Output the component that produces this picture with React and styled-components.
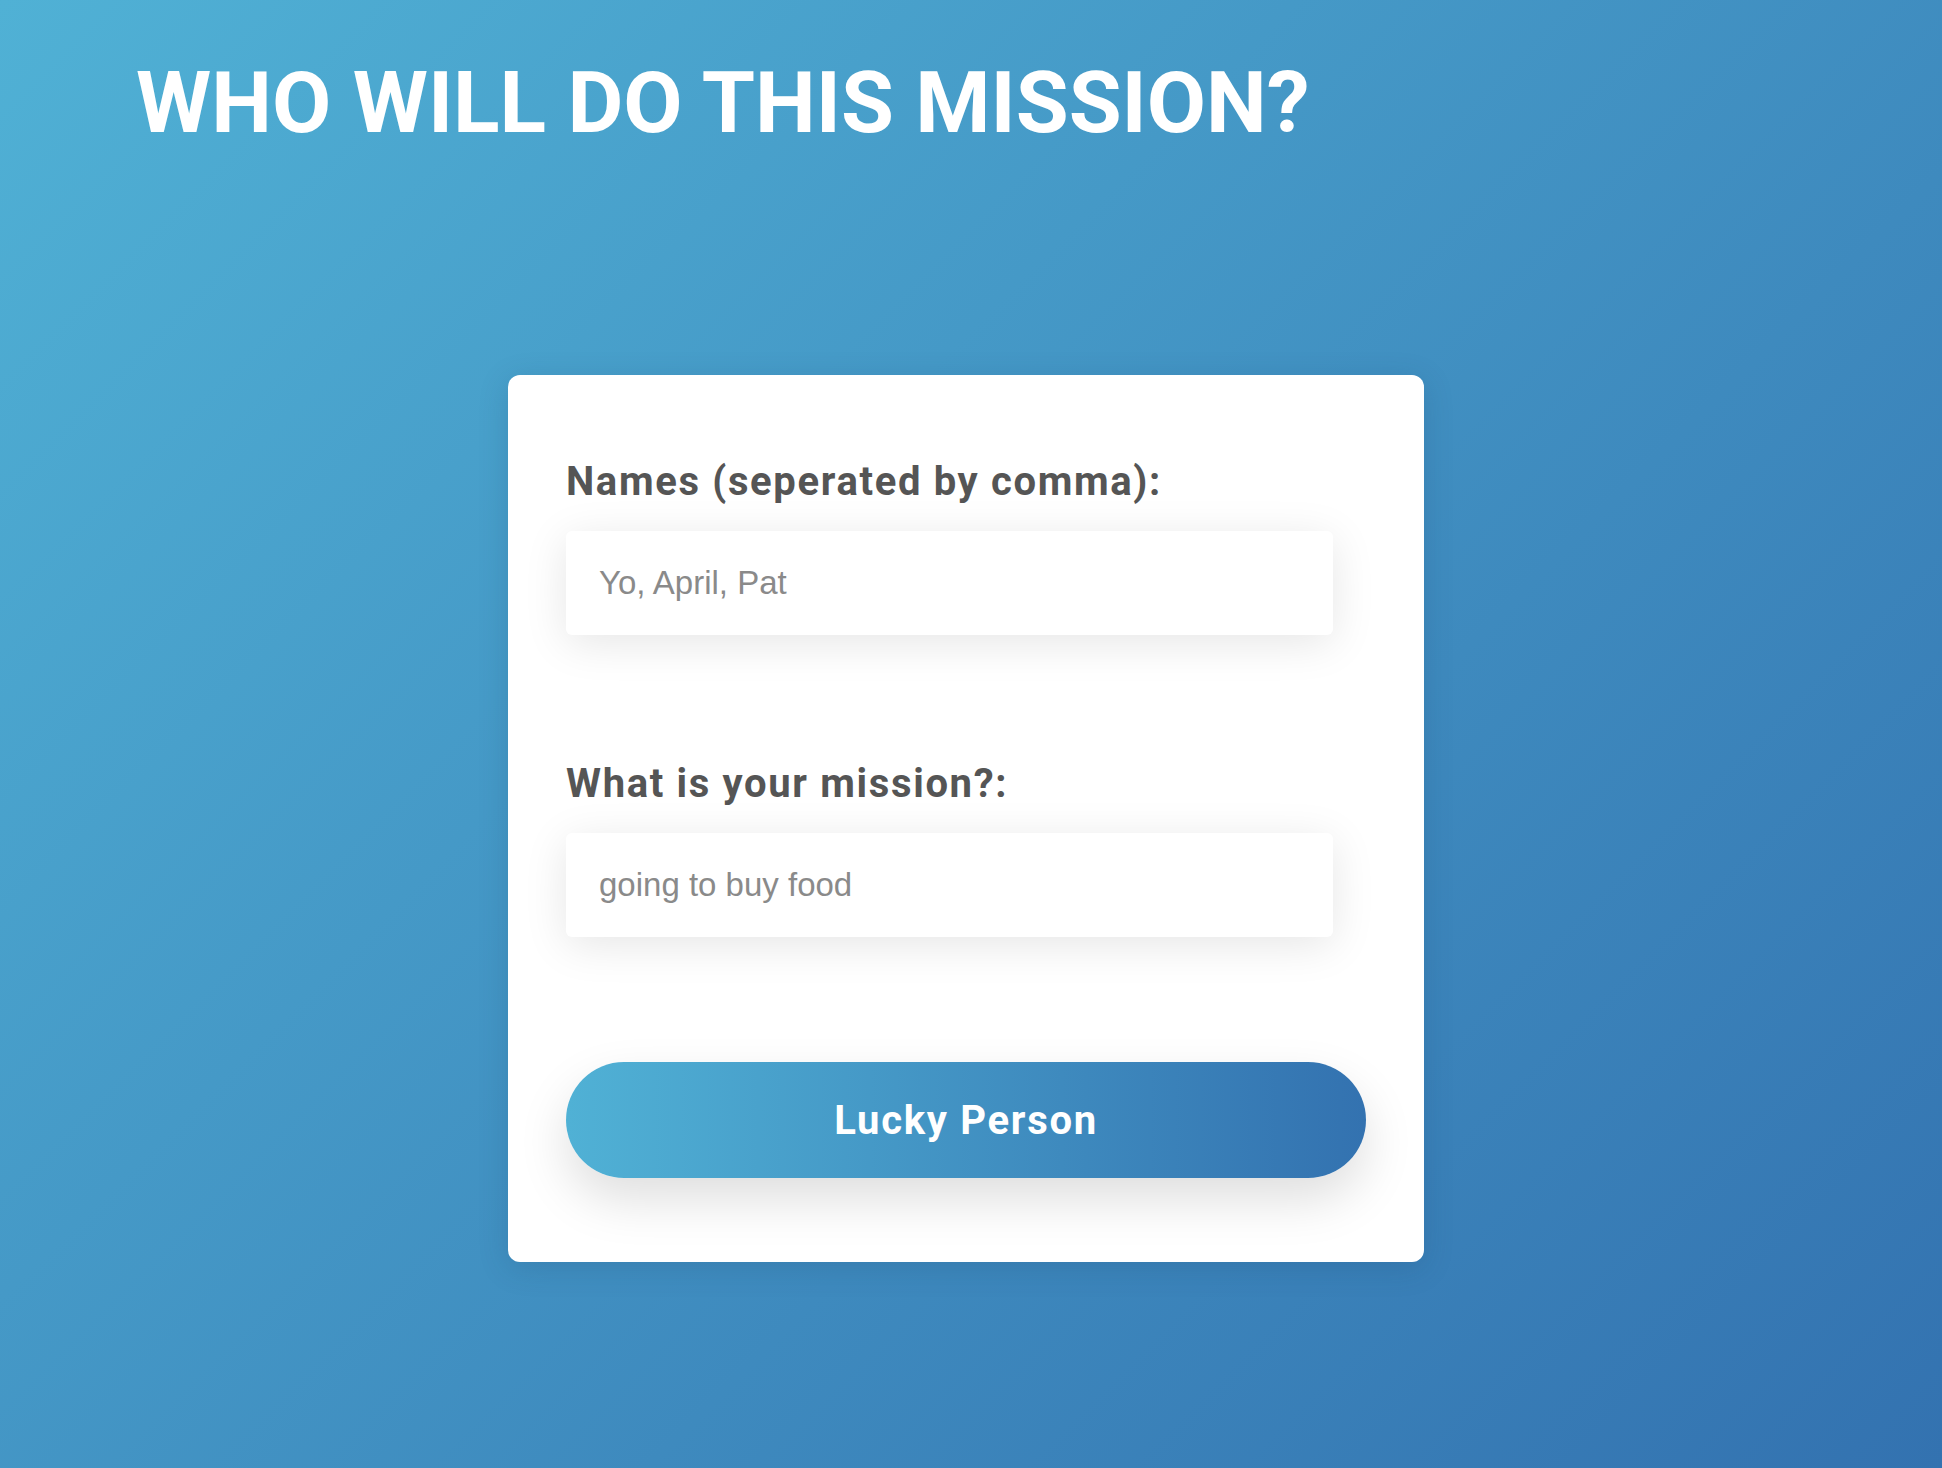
import React from 'react'
import styled, { createGlobalStyle } from 'styled-components'

const GlobalStyle = createGlobalStyle`
  html, body {
    margin: 0;
    padding: 0;
  }
  body {
    font-family: Roboto, 'Liberation Sans', sans-serif;
  }
`

const Page = styled.div`
  width: 100%;
  min-height: 1468px;
  box-sizing: border-box;
  padding: 52px 0 0 0;
  background: linear-gradient(135deg, #50b1d5 0%, #3372b0 100%);
  display: flex;
  flex-direction: column;
`

const Heading = styled.h1`
  margin: 0 0 0 136px;
  font-family: Roboto, sans-serif;
  font-weight: 700;
  font-size: 86px;
  line-height: 101px;
  color: #ffffff;
  letter-spacing: 0;
`

const Stage = styled.div`
  display: flex;
  justify-content: center;
  margin-top: 222px;
  padding-right: 10px;
`

const Card = styled.form`
  width: 916px;
  box-sizing: border-box;
  padding: 83px 58px 84px 58px;
  background: #ffffff;
  border-radius: 12px;
  box-shadow: 0 6px 30px rgba(20, 60, 100, 0.18);
  display: flex;
  flex-direction: column;
`

const Field = styled.div`
  display: flex;
  flex-direction: column;
  margin-bottom: 125px;
`

const Label = styled.label`
  font-family: Roboto, sans-serif;
  font-weight: 700;
  font-size: 40px;
  line-height: 47px;
  color: #555555;
  letter-spacing: 1.65px;
  margin-bottom: 26px;
`

const Input = styled.input`
  width: 767px;
  height: 104px;
  box-sizing: border-box;
  border: none;
  outline: none;
  border-radius: 6px;
  padding: 0 33px;
  background: #ffffff;
  font-family: 'Liberation Sans', Arial, sans-serif;
  font-size: 33px;
  color: #555555;
  box-shadow: 0 8px 44px rgba(0, 0, 0, 0.1);

  &::placeholder {
    color: #8a8a8a;
  }
`

const Button = styled.button`
  width: 800px;
  height: 116px;
  border: none;
  outline: none;
  cursor: pointer;
  border-radius: 58px;
  background: linear-gradient(90deg, #50b1d5 0%, #3372b0 100%);
  color: #ffffff;
  font-family: Roboto, sans-serif;
  font-weight: 700;
  font-size: 40px;
  letter-spacing: 1.7px;
  box-shadow: 0 22px 50px rgba(0, 0, 0, 0.13);
`

const App = () => (
  <>
    <GlobalStyle />
    <Page>
      <Heading>WHO WILL DO THIS MISSION?</Heading>
      <Stage>
        <Card onSubmit={e => e.preventDefault()}>
          <Field>
            <Label htmlFor="names">Names (seperated by comma):</Label>
            <Input id="names" type="text" placeholder="Yo, April, Pat" />
          </Field>
          <Field>
            <Label htmlFor="mission">What is your mission?:</Label>
            <Input id="mission" type="text" placeholder="going to buy food" />
          </Field>
          <Button type="submit">Lucky Person</Button>
        </Card>
      </Stage>
    </Page>
  </>
)

export default App
